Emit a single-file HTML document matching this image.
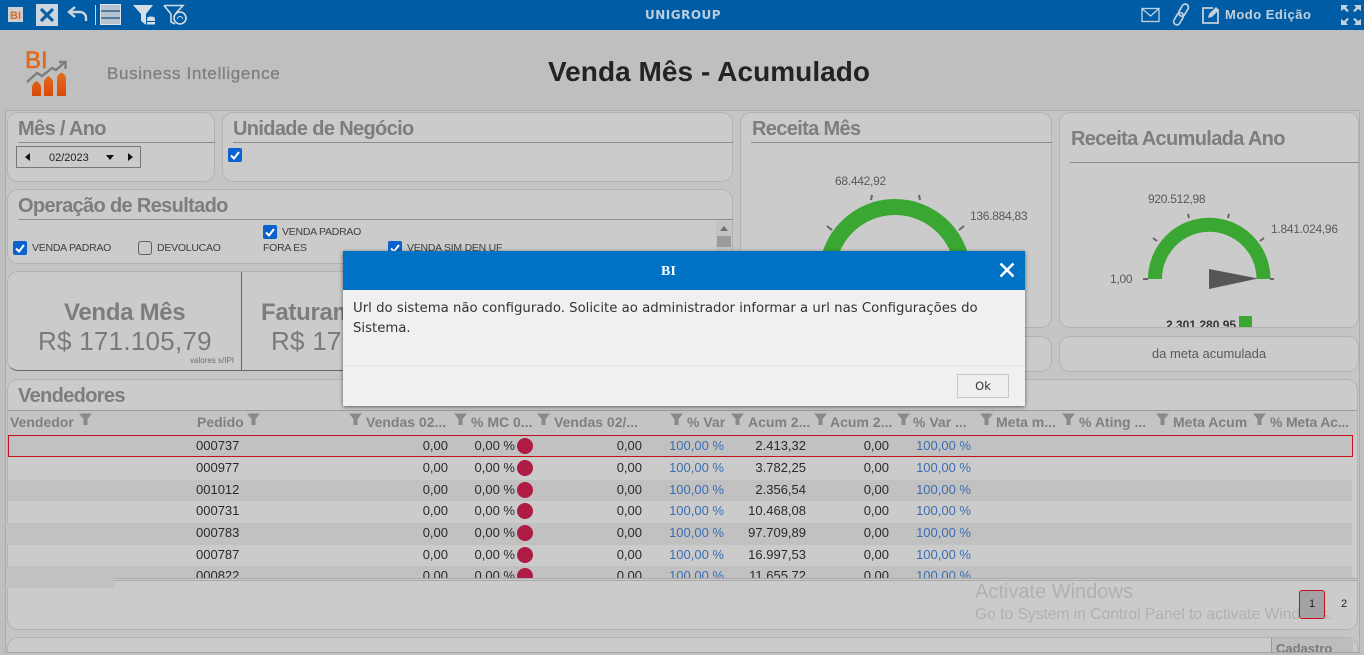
<!DOCTYPE html>
<html lang="pt"><head><meta charset="utf-8"><title>Venda Mês - Acumulado</title>
<style>
*{box-sizing:border-box}
html,body{margin:0;padding:0;width:1364px;height:655px;overflow:hidden;background:#bfbfbf;font-family:"Liberation Sans",sans-serif}
#w{position:relative;width:1364px;height:655px;overflow:hidden}
.a{position:absolute}
.t{position:absolute;white-space:nowrap;line-height:1}
.p{position:absolute;border:1px solid #b3b3b3;border-radius:11px;background:#cbcbcb}
.h{position:absolute;font-weight:bold;font-size:20px;line-height:24px;color:#7d7d7d;white-space:nowrap;letter-spacing:-.65px}
.l{position:absolute;height:1px;background:#8c8c8c}
.c{position:absolute;width:14px;height:14px;border-radius:2px;background:#0b62cf}
.c svg{display:block}
.u{position:absolute;width:14px;height:14px;border-radius:3px;border:1px solid #5f5f5f}
.o{position:absolute;font-size:10.500px;letter-spacing:-.25px;line-height:12px;color:#3d3d3d;white-space:nowrap}
.g{position:absolute;font-size:12px;letter-spacing:-.28px;line-height:14px;color:#5a5a5a;white-space:nowrap}
.th{position:absolute;top:414px;font-size:14px;font-weight:bold;line-height:16px;color:#7f7f7f;white-space:nowrap}
.f{position:absolute;top:413px}
.r{position:absolute;left:0;width:1364px;height:22px;font-size:13px;line-height:20px;color:#2a2a2a}
.r span{position:absolute;top:0;white-space:nowrap}
.r i{position:absolute;left:517px;top:2px;width:16px;height:16px;border-radius:50%;background:#ae1b45}
.n{text-align:right}
.b{color:#3b6eb2}
</style></head>
<body><div id="w">
<!-- top bar -->
<div class="a" style="left:0;top:0;width:1364px;height:30px;background:#005ca5"></div>
<svg class="a" style="left:0;top:0" width="200" height="30" viewBox="0 0 200 30">
<rect x="8" y="7" width="15" height="15" fill="#cfcfcf"/>
<text x="10" y="19" font-family="Liberation Sans" font-size="11" font-weight="bold" fill="#d9692c">BI</text>
<rect x="36" y="4" width="22" height="22" fill="#cdd6de"/>
<path d="M41 9 L53 21 M53 9 L41 21" stroke="#0f5ea6" stroke-width="3.2"/>
<path d="M71 12 H81 A6 6 0 0 1 86 18 V21" fill="none" stroke="#cdd6de" stroke-width="2.4"/>
<path d="M75 7 L69 12 L75 17" fill="none" stroke="#cdd6de" stroke-width="2.4"/>
<rect x="95" y="5" width="1" height="20" fill="#cdd6de"/>
<rect x="100.500" y="4.500" width="20" height="20" fill="#b7c3ce" stroke="#dfe5ea"/>
<path d="M101 11 H120 M101 18 H120" stroke="#15507f" stroke-width="1.300"/>
<path d="M133 5 H153 L146 14 V25 L141 21 V14 Z" fill="#d6dde3"/>
<ellipse cx="151" cy="18" rx="4" ry="1.500" fill="#d6dde3"/><rect x="147" y="19" width="8" height="2" fill="#d6dde3"/><rect x="147" y="22" width="8" height="2.500" fill="#d6dde3"/>
<path d="M164 5.500 H183 L176 13 M171 14 V22 L175 24" fill="none" stroke="#d6dde3" stroke-width="1.600"/>
<path d="M164 5.500 L171 14" fill="none" stroke="#d6dde3" stroke-width="1.600"/>
<circle cx="180" cy="18" r="6" fill="none" stroke="#d6dde3" stroke-width="1.600"/>
<path d="M177.500 19 A2.500 2.500 0 0 1 182.500 19" fill="none" stroke="#d6dde3"/>
</svg>
<div class="t" style="left:645px;top:9px;font-family:'DejaVu Sans',sans-serif;font-weight:bold;font-size:12px;letter-spacing:.5px;color:#b9cfe0">UNIGROUP</div>
<svg class="a" style="left:1135px;top:0" width="229" height="30" viewBox="1135 0 229 30">
<rect x="1142" y="8.500" width="17" height="13" fill="none" stroke="#c4d0da" stroke-width="1.300"/>
<path d="M1142.500 9 L1150.500 16 L1158.500 9" fill="none" stroke="#c4d0da" stroke-width="1.300"/>
<g fill="none" stroke="#c4d0da" stroke-width="1.700" transform="rotate(-60 1181 15)">
<rect x="1170" y="11.500" width="13" height="6.500" rx="3.200"/><rect x="1180" y="11.500" width="13" height="6.500" rx="3.200"/></g>
<path d="M1218 9 V23 H1203 V8 H1213" fill="none" stroke="#c4d0da" stroke-width="1.800"/>
<path d="M1209 14 L1216 7 L1219 10 L1212 17 L1208 18 Z" fill="#c4d0da"/>
<g fill="#c4d0da">
<path d="M1341 5 H1348 L1346 7.500 L1349 11 L1347 12 L1344 9 L1341 11 Z"/>
<path d="M1361 5 H1354 L1356 7.500 L1353 11 L1355 12 L1358 9 L1361 11 Z"/>
<path d="M1341 25 H1348 L1346 22.500 L1349 19 L1347 18 L1344 21 L1341 19 Z"/>
<path d="M1361 25 H1354 L1356 22.500 L1353 19 L1355 18 L1358 21 L1361 19 Z"/>
</g></svg>
<div class="t" style="left:1225px;top:8px;font-weight:bold;font-size:13px;letter-spacing:.5px;color:#c4d0da">Modo Edição</div>

<!-- logo row -->
<svg class="a" style="left:20px;top:44px" width="55" height="56" viewBox="20 44 55 56">
<defs><linearGradient id="og" x1="0" y1="0" x2="0" y2="1"><stop offset="0" stop-color="#e4701d"/><stop offset="1" stop-color="#d9480c"/></linearGradient></defs>
<text x="25" y="68" font-family="Liberation Sans" font-size="24" fill="#df6a1e" stroke="#df6a1e" stroke-width=".6">BI</text>
<path d="M27 82 L37 73 L42 76 L52 68 L56 70 L64 63" fill="none" stroke="#7d7d7d" stroke-width="2.400"/>
<path d="M59 62 H65.500 V69" fill="none" stroke="#7d7d7d" stroke-width="2.400"/>
<path d="M32 96 V87 Q32 84 36.500 81 Q41 84 41 87 V96 Z M44 96 V82 Q44 79 48.500 76 Q53 79 53 82 V96 Z M57 96 V78 Q57 75 61.500 72.500 Q66 75 66 78 V96 Z" fill="url(#og)"/>
</svg>
<div class="t" style="left:107px;top:65px;font-size:17px;letter-spacing:.65px;color:#7f7f7f;-webkit-text-stroke:.3px #7f7f7f">Business Intelligence</div>
<div class="t" style="left:548px;top:58px;font-weight:bold;font-size:28px;color:#232323;letter-spacing:.05px">Venda Mês - Acumulado</div>

<!-- outer container -->
<div class="a" style="left:5px;top:110px;width:1355px;height:544px;border:1px solid #ababab;background:#c5c5c5"></div>

<!-- mes/ano -->
<div class="p" style="left:7px;top:112px;width:208px;height:70px"></div>
<div class="h" style="left:18px;top:117px">Mês / Ano</div>
<div class="l" style="left:18px;top:142px;width:197px"></div>
<div class="a" style="left:16px;top:146px;width:125px;height:22px;border:1px solid #787878"></div>
<div class="a" style="left:25px;top:153px;width:0;height:0;border:4px solid transparent;border-left:0;border-right:5px solid #111"></div>
<div class="t" style="left:49px;top:153px;font-size:11px;color:#222">02/2023</div>
<div class="a" style="left:106px;top:155px;width:0;height:0;border:4px solid transparent;border-bottom:0;border-top:5px solid #111"></div>
<div class="a" style="left:128px;top:153px;width:0;height:0;border:4px solid transparent;border-right:0;border-left:5px solid #111"></div>

<!-- unidade -->
<div class="p" style="left:222px;top:112px;width:511px;height:70px"></div>
<div class="h" style="left:233px;top:117px">Unidade de Negócio</div>
<div class="l" style="left:233px;top:142px;width:500px"></div>
<div class="c" style="left:228px;top:148px"><svg width="14" height="14"><path d="M3 7.500 L6 10.500 L11 4" fill="none" stroke="#fff" stroke-width="2"/></svg></div>

<!-- operacao -->
<div class="p" style="left:7px;top:189px;width:726px;height:75px"></div>
<div class="h" style="left:18px;top:194px">Operação de Resultado</div>
<div class="l" style="left:18px;top:219px;width:715px"></div>
<div class="c" style="left:13px;top:241px"><svg width="14" height="14"><path d="M3 7.500 L6 10.500 L11 4" fill="none" stroke="#fff" stroke-width="2"/></svg></div>
<div class="o" style="left:32px;top:242px">VENDA PADRAO</div>
<div class="u" style="left:138px;top:241px"></div>
<div class="o" style="left:157px;top:242px">DEVOLUCAO</div>
<div class="c" style="left:263px;top:225px"><svg width="14" height="14"><path d="M3 7.500 L6 10.500 L11 4" fill="none" stroke="#fff" stroke-width="2"/></svg></div>
<div class="o" style="left:282px;top:226px">VENDA PADRAO</div>
<div class="o" style="left:263px;top:242px">FORA ES</div>
<div class="c" style="left:388px;top:241px"><svg width="14" height="14"><path d="M3 7.500 L6 10.500 L11 4" fill="none" stroke="#fff" stroke-width="2"/></svg></div>
<div class="o" style="left:407px;top:242px">VENDA SIM DEN UF</div>
<div class="a" style="left:716px;top:220px;width:16px;height:44px;background:#c3c3c3"></div>
<div class="a" style="left:720px;top:226px;width:0;height:0;border:4px solid transparent;border-top:0;border-bottom:5px solid #6f6f6f"></div>
<div class="a" style="left:717px;top:236px;width:14px;height:11px;background:#9c9c9c"></div>

<!-- venda -->
<div class="p" style="left:7px;top:271px;width:726px;height:100px;border-bottom-color:#666"></div>
<div class="a" style="left:241px;top:272px;width:1px;height:99px;background:#666"></div>
<div class="t" style="left:64px;top:301px;font-weight:bold;font-size:24px;letter-spacing:-.3px;color:#7d7d7d">Venda Mês</div>
<div class="t" style="left:38px;top:328px;font-size:26px;letter-spacing:.25px;color:#7a7a7a">R$ 171.105,79</div>
<div class="t" style="left:190px;top:357px;font-size:8px;color:#6e6e6e">valores s/IPI</div>
<div class="t" style="left:261px;top:301px;font-weight:bold;font-size:24px;letter-spacing:-.3px;color:#7d7d7d">Faturamento</div>
<div class="t" style="left:271px;top:328px;font-size:26px;letter-spacing:.25px;color:#7a7a7a">R$ 171.105,79</div>

<!-- receita mes -->
<div class="p" style="left:740px;top:112px;width:312px;height:216px"></div>
<div class="h" style="left:752px;top:117px">Receita Mês</div>
<div class="l" style="left:751px;top:142px;width:301px"></div>
<svg class="a" style="left:800px;top:190px" width="190" height="100" viewBox="800 190 190 100">
<path d="M827 275 A68 68 0 0 1 963 275" fill="none" stroke="#3ba733" stroke-width="16"/>
<path d="M871 200 L872 195 M920 200 L919 195 M832 230 L827 226 M959 230 L964 226" stroke="#666" stroke-width="2"/>
</svg>
<div class="g" style="left:835px;top:174px">68.442,92</div>
<div class="g" style="left:970px;top:209px">136.884,83</div>
<div class="p" style="left:740px;top:336px;width:312px;height:36px"></div>

<!-- receita acumulada -->
<div class="p" style="left:1059px;top:112px;width:300px;height:216px;overflow:hidden">
<div class="t" style="left:106px;top:206px;font-size:12px;font-weight:bold;color:#333">2.301.280,95</div>
<div class="a" style="left:179px;top:203px;width:13px;height:12px;background:#3ba733"></div>
</div>
<div class="h" style="left:1071px;top:127px">Receita Acumulada Ano</div>
<div class="l" style="left:1070px;top:162px;width:289px"></div>
<svg class="a" style="left:1140px;top:210px" width="140" height="85" viewBox="1140 210 140 85">
<path d="M1155 279 A54 54 0 0 1 1263.500 279" fill="none" stroke="#3ba733" stroke-width="14"/>
<path d="M1189 218 L1188 214 M1228 218 L1229 214 M1157 241 L1153 238 M1260 241 L1264 238 M1143 279 H1148 M1270 279 H1274" stroke="#666" stroke-width="2"/>
<path d="M1209 269 L1258 278.500 L1209 289 Z" fill="#565656"/>
</svg>
<div class="g" style="left:1148px;top:192px">920.512,98</div>
<div class="g" style="left:1271px;top:222px">1.841.024,96</div>
<div class="g" style="left:1110px;top:272px">1,00</div>
<div class="p" style="left:1059px;top:336px;width:300px;height:36px"></div>
<div class="g" style="left:1059px;top:347px;width:300px;text-align:center;font-size:13px;letter-spacing:0">da meta acumulada</div>

<!-- vendedores -->
<div class="p" style="left:7px;top:379px;width:1351px;height:251px"></div>
<div class="h" style="left:18px;top:384px">Vendedores</div>
<div class="a" style="left:8px;top:410px;width:1349px;height:25px;background:#c4c4c4;border-top:1px solid #9a9a9a"></div>
<div class="th" style="left:10px">Vendedor</div>
<div class="th" style="left:197px">Pedido</div>
<div class="th" style="left:366px">Vendas 02...</div>
<div class="th" style="left:471px">% MC 0...</div>
<div class="th" style="left:554px">Vendas 02/...</div>
<div class="th" style="left:687px">% Var</div>
<div class="th" style="left:748px">Acum 2...</div>
<div class="th" style="left:830px">Acum 2...</div>
<div class="th" style="left:913px">% Var ...</div>
<div class="th" style="left:996px">Meta m...</div>
<div class="th" style="left:1079px">% Ating ...</div>
<div class="th" style="left:1173px">Meta Acum</div>
<div class="th" style="left:1270px;letter-spacing:-.2px">% Meta Ac...</div>
<svg class="a" style="left:0;top:410px" width="1364" height="18" viewBox="0 410 1364 18">
<defs><path id="fn" d="M0 3.500 H13 L8.500 9 V15 H4.500 V9 Z" fill="#8a8a8a"/></defs>
<use href="#fn" x="79" y="410"/><use href="#fn" x="247" y="410"/><use href="#fn" x="349" y="410"/><use href="#fn" x="454" y="410"/><use href="#fn" x="537" y="410"/><use href="#fn" x="670" y="410"/><use href="#fn" x="731" y="410"/><use href="#fn" x="814" y="410"/><use href="#fn" x="897" y="410"/><use href="#fn" x="980" y="410"/><use href="#fn" x="1062" y="410"/><use href="#fn" x="1156" y="410"/><use href="#fn" x="1253" y="410"/>
</svg>

<div class="a" style="left:8px;top:480px;width:1344px;height:21px;background:#c1c1c1"></div>
<div class="a" style="left:7px;top:523px;width:1345px;height:22px;background:#c1c1c1"></div>
<div class="a" style="left:7px;top:566px;width:1345px;height:12px;background:#c1c1c1"></div>
<div class="a" style="left:7px;top:578px;width:108px;height:10px;background:#c1c1c1"></div>
<div class="a" style="left:8px;top:435px;width:1345px;height:22px;background:#c1c1c1;border:1px solid #c4121b"></div>

<div class="r" style="top:436px"><span style="left:196px">000737</span><span class="n" style="right:916px">0,00</span><span class="n" style="right:849px">0,00 %</span><i></i><span class="n" style="right:722px">0,00</span><span class="n b" style="right:640px">100,00 %</span><span class="n" style="right:558px">2.413,32</span><span class="n" style="right:475px">0,00</span><span class="n b" style="right:393px">100,00 %</span></div>
<div class="r" style="top:458px"><span style="left:196px">000977</span><span class="n" style="right:916px">0,00</span><span class="n" style="right:849px">0,00 %</span><i></i><span class="n" style="right:722px">0,00</span><span class="n b" style="right:640px">100,00 %</span><span class="n" style="right:558px">3.782,25</span><span class="n" style="right:475px">0,00</span><span class="n b" style="right:393px">100,00 %</span></div>
<div class="r" style="top:480px"><span style="left:196px">001012</span><span class="n" style="right:916px">0,00</span><span class="n" style="right:849px">0,00 %</span><i></i><span class="n" style="right:722px">0,00</span><span class="n b" style="right:640px">100,00 %</span><span class="n" style="right:558px">2.356,54</span><span class="n" style="right:475px">0,00</span><span class="n b" style="right:393px">100,00 %</span></div>
<div class="r" style="top:501px"><span style="left:196px">000731</span><span class="n" style="right:916px">0,00</span><span class="n" style="right:849px">0,00 %</span><i></i><span class="n" style="right:722px">0,00</span><span class="n b" style="right:640px">100,00 %</span><span class="n" style="right:558px">10.468,08</span><span class="n" style="right:475px">0,00</span><span class="n b" style="right:393px">100,00 %</span></div>
<div class="r" style="top:523px"><span style="left:196px">000783</span><span class="n" style="right:916px">0,00</span><span class="n" style="right:849px">0,00 %</span><i></i><span class="n" style="right:722px">0,00</span><span class="n b" style="right:640px">100,00 %</span><span class="n" style="right:558px">97.709,89</span><span class="n" style="right:475px">0,00</span><span class="n b" style="right:393px">100,00 %</span></div>
<div class="r" style="top:545px"><span style="left:196px">000787</span><span class="n" style="right:916px">0,00</span><span class="n" style="right:849px">0,00 %</span><i></i><span class="n" style="right:722px">0,00</span><span class="n b" style="right:640px">100,00 %</span><span class="n" style="right:558px">16.997,53</span><span class="n" style="right:475px">0,00</span><span class="n b" style="right:393px">100,00 %</span></div>
<div class="r" style="top:566px;height:12px;overflow:hidden"><span style="left:196px">000822</span><span class="n" style="right:916px">0,00</span><span class="n" style="right:849px">0,00 %</span><i></i><span class="n" style="right:722px">0,00</span><span class="n b" style="right:640px">100,00 %</span><span class="n" style="right:558px">11.655,72</span><span class="n" style="right:475px">0,00</span><span class="n b" style="right:393px">100,00 %</span></div>

<div class="a" style="left:115px;top:578px;width:1242px;height:1px;background:#a9a9a9"></div>
<div class="a" style="left:115px;top:580px;width:1242px;height:1px;background:#a9a9a9"></div>
<div class="t" style="left:975px;top:582px;font-size:20px;color:#b0b0b0">Activate Windows</div>
<div class="t" style="left:975px;top:607px;font-size:15.600px;color:#b0b0b0">Go to System in Control Panel to activate Windows.</div>
<div class="a" style="left:1299px;top:590px;width:26px;height:29px;background:#a3a3a3;border:1px solid #c4121b;border-radius:3px"></div>
<div class="t" style="left:1309px;top:599px;font-size:11px;color:#222">1</div>
<div class="t" style="left:1341px;top:599px;font-size:11px;color:#222">2</div>

<!-- bottom panel -->
<div class="p" style="left:7px;top:637px;width:1351px;height:30px"></div>
<div class="a" style="left:1271px;top:638px;width:82px;height:14px;background:#bdbdbd;border-left:1px solid #999;overflow:hidden"><div class="t" style="left:4px;top:4px;font-weight:bold;font-size:13px;color:#7a7a7a">Cadastro</div></div>
<div class="a" style="left:5px;top:652px;width:1355px;height:1px;background:#a5a5a5"></div>
<div class="a" style="left:0;top:653px;width:1364px;height:2px;background:#bfbfbf"></div>

<!-- dialog -->
<div class="a" style="left:343px;top:251px;width:682px;height:155px;background:#f0f0f0;box-shadow:0 1px 4px rgba(0,0,0,.55)"></div>
<div class="a" style="left:343px;top:251px;width:682px;height:39px;background:#0072c6"></div>
<div class="t" style="left:661px;top:265px;font-family:'Liberation Serif',serif;font-weight:bold;font-size:14px;color:#fff">BI</div>
<svg class="a" style="left:999px;top:262px" width="16" height="16"><path d="M1.500 1.500 L14.500 14.500 M14.500 1.500 L1.500 14.500" stroke="#fff" stroke-width="2.600"/></svg>
<div class="a" style="left:353px;top:299px;width:670px;font-family:'DejaVu Sans',sans-serif;font-size:13.270px;line-height:20px;color:#333;white-space:nowrap">Url do sistema não configurado. Solicite ao administrador informar a url nas Configurações do<br>Sistema.</div>
<div class="a" style="left:343px;top:365px;width:682px;height:1px;background:#e4e4e4"></div>
<div class="a" style="left:957px;top:374px;width:52px;height:24px;background:#efefef;border:1px solid #c8c8c8;text-align:center;font-family:'DejaVu Sans',sans-serif;font-size:11.500px;line-height:22px;color:#333">Ok</div>
</div></body></html>
